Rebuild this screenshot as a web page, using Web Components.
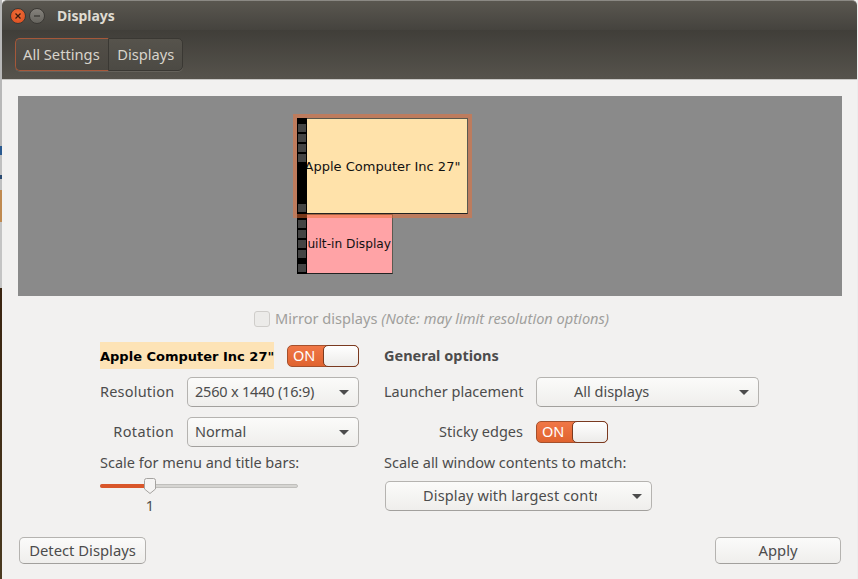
<!DOCTYPE html>
<html lang="en"><head><meta charset="utf-8"><title>Displays</title>
<style>
html,body{margin:0;padding:0;width:858px;height:579px;overflow:hidden;background:#ededed}
body{display:flex;font:15px "Noto Sans","Open Sans",sans-serif;color:#4c4c4c}
.strip{width:2px;height:579px;flex:none;background:linear-gradient(#b8b8b8 0,#b8b8b8 146px,#2a5a90 146px,#2a5a90 155px,#c0c0c0 155px,#c0c0c0 175px,#2a4a70 175px,#2a4a70 179px,#c0c0c0 179px,#c0c0c0 190px,#c08a50 190px,#c08a50 222px,#c4c4c4 222px,#c4c4c4 288px,#3a2410 288px,#4a3a20 100%)}
</style></head><body>
<div class="strip"></div>
<x-window>
  <x-titlebar slot="bar" title-text="Displays"></x-titlebar>
  <x-crumbs slot="bar"><x-crumb active>All Settings</x-crumb><x-crumb>Displays</x-crumb></x-crumbs>
  <x-preview>
    <x-monitor style="left:279px;top:118px;width:96px;height:60px;--fill:#ffa3a6;--fs:12.2px" label="Built-in Display"></x-monitor>
    <x-monitor style="left:279px;top:22px;width:171px;height:96px;--fill:#ffe2aa;--fs:13px" selected label="Apple Computer Inc 27&quot;"></x-monitor>
  </x-preview>
  <x-mirror>Mirror displays <i>(Note: may limit resolution options)</i></x-mirror>
  <x-columns>
    <x-col style="width:259px">
      <x-row style="height:27px"><x-heading>Apple Computer Inc 27"</x-heading><x-switch style="margin-left:13px"></x-switch></x-row>
      <x-row style="margin-top:8px"><x-label style="width:74px;justify-content:flex-start;letter-spacing:.2px">Resolution</x-label><x-combo style="width:172px;margin-left:13px;letter-spacing:-.2px" value="2560 x 1440 (16:9)"></x-combo></x-row>
      <x-row style="margin-top:10px"><x-label style="width:74px;letter-spacing:.35px">Rotation</x-label><x-combo style="width:172px;margin-left:13px" value="Normal"></x-combo></x-row>
      <x-label style="margin-top:6px;height:20px;justify-content:flex-start">Scale for menu and title bars:</x-label>
      <x-slider style="margin-top:5px" value="1"></x-slider>
    </x-col>
    <x-col style="width:376px;margin-left:25px">
      <x-label style="height:27px;justify-content:flex-start"><b style="font-weight:700;font-size:14.5px;color:#4c4c4c">General options</b></x-label>
      <x-row style="margin-top:8px"><x-label style="width:139px;justify-content:flex-start">Launcher placement</x-label><x-combo style="width:223px;margin-left:13px" value="All displays" inset="30"></x-combo></x-row>
      <x-row style="margin-top:10px"><x-label style="width:139px">Sticky edges</x-label><x-switch style="margin-left:13px;margin-block:4px"></x-switch></x-row>
      <x-label style="margin-top:6px;height:20px;justify-content:flex-start">Scale all window contents to match:</x-label>
      <x-combo style="width:267px;margin-left:1px;margin-top:8px;letter-spacing:.15px" value="Display with largest contr" inset="30" clip></x-combo>
    </x-col>
  </x-columns>
  <x-actions>
    <x-button style="width:127px">Detect Displays</x-button>
    <x-button style="width:126px">Apply</x-button>
  </x-actions>
</x-window>
<script>
function def(name,css,html){
  customElements.define(name,class extends HTMLElement{
    constructor(){super();this.attachShadow({mode:'open'})}
    connectedCallback(){
      this.shadowRoot.innerHTML='<style>'+css+'</style>'+(typeof html==='function'?html(this):html);
    }
  });
}
const FONT='"Noto Sans","Open Sans",sans-serif';
def('x-window',`:host{display:flex;flex-direction:column;width:855px;height:579px;flex:none;background:#f2f1f0;box-sizing:border-box;color:#4c4c4c;font:14.5px ${FONT}}
  .bar{display:block;flex:none}
  .body{flex:1;display:flex;flex-direction:column;padding:16px 15px 0 16px;border-top:1px solid #c9c8c5;min-height:0}`,
  `<div class="bar"><slot name="bar"></slot></div><div class="body"><slot></slot></div>`);
def('x-titlebar',`:host{display:flex;align-items:center;height:30px;box-sizing:border-box;border-top:1px solid #8b8984;border-radius:5px 5px 0 0;background:linear-gradient(#5a5750,#45433e);padding-left:8px}
  .b{width:16px;height:16px;box-sizing:border-box;border-radius:50%;display:flex;align-items:center;justify-content:center;flex:none}
  .c{background:radial-gradient(circle at 50% 40%,#f0703a,#d9481c);border:1px solid #3b3935;margin-right:3px}
  .m{background:linear-gradient(#85827c,#66645e);border:1px solid #3b3935}
  .t{margin-left:12px;font:700 14px ${FONT};color:#dfdbd2}
  svg{display:block}`,
  h=>`<span class="b c"><svg width="8" height="8" viewBox="0 0 8 8"><path d="M1.500 1.500l5 5M6.500 1.500l-5 5" stroke="#3c1a0c" stroke-width="1.300"/></svg></span>
  <span class="b m"><svg width="8" height="8" viewBox="0 0 8 8"><path d="M1 4h6" stroke="#3a3834" stroke-width="1.300"/></svg></span>
  <span class="t">${h.getAttribute('title-text')}</span>`);
def('x-crumbs',`:host{display:flex;align-items:center;height:49px;box-sizing:border-box;padding-left:13px;background:linear-gradient(#403e39,#56534c)}
  .g{display:flex;height:33px;box-sizing:border-box;border:1px solid #3a3833;border-radius:5px;background:linear-gradient(#56534c,#4c4a44);box-shadow:0 1px 0 #65625b}`,
  `<div class="g"><slot></slot></div>`);
def('x-crumb',`:host{display:flex;align-items:center;padding:0 8px 1px 8.500px;font:14.7px ${FONT};color:#d8d4cb;border-right:1px solid #3a3833;box-sizing:border-box}
  :host(:last-child){border-right:0}
  :host([active]){padding:0 8px 1px 7px;border:1px solid #a5583a;border-right-color:#3a3833;margin:-1px 0 -1px -1px;border-radius:5px 0 0 5px;background:linear-gradient(#534f48,#4a4741)}`,
  `<slot></slot>`);
def('x-preview',`:host{display:block;position:relative;height:200px;background:#8a8a8a;flex:none;overflow:hidden}`,`<slot></slot>`);
def('x-monitor',`:host{position:absolute;display:block;background:var(--fill);font:var(--fs,13px) "DejaVu Sans",sans-serif;color:#111}
  :host([selected]){outline:4px solid rgba(240,110,50,.5);z-index:1}
  .f{position:absolute;inset:0;box-sizing:border-box;border:1px solid #5a5a50;border-left:0;border-bottom-color:#222}
  .s{position:absolute;left:0;top:0;bottom:0;width:10px;background:#000;display:flex;flex-direction:column;padding:6px 0 2px;box-sizing:border-box}
  .h{height:8px;width:8px;margin:0 1px 2px;background:#444;flex:none}
  .h:last-child{margin-top:auto;margin-bottom:0}
  .l{position:absolute;left:0;right:0;top:0;bottom:0;display:flex;align-items:center;justify-content:center;white-space:nowrap}`,
  h=>`<div class="l">${h.getAttribute('label')}</div><div class="f"></div><div class="s"><div class="h"></div><div class="h"></div><div class="h"></div><div class="h"></div><div class="h"></div></div>`);
def('x-mirror',`:host{display:flex;align-items:center;justify-content:center;height:23px;margin-top:11px;margin-left:3px;font:14.6px ${FONT};color:#a09f9c;white-space:nowrap}
  .cb{width:14px;height:14px;border:1px solid #cfcdca;border-radius:3px;background:#ecebe9;margin-right:5px;flex:none;margin-bottom:-1px}
  .x{padding-bottom:2px}`,
  `<span class="cb"></span><span class="x"><slot></slot></span>`);
def('x-columns',`:host{display:flex;margin-top:12px;margin-left:82px}`,`<slot></slot>`);
def('x-col',`:host{display:flex;flex-direction:column;flex:none}`,`<slot></slot>`);
def('x-row',`:host{display:flex;align-items:center}`,`<slot></slot>`);
def('x-label',`:host{display:flex;align-items:center;justify-content:flex-end;white-space:nowrap;font:14.5px ${FONT};color:#4c4c4c;flex:none;padding-bottom:2px;box-sizing:border-box}`,`<slot></slot>`);
def('x-heading',`:host{display:flex;align-items:center;height:27px;width:174px;box-sizing:border-box;padding-top:1px;background:#fde3b6;font:700 13px "DejaVu Sans",sans-serif;color:#000;white-space:nowrap;flex:none}`,`<slot></slot>`);
def('x-switch',`:host{display:flex;position:relative;flex:none;width:72px;height:22px;box-sizing:border-box;border:1px solid #a5502c;border-radius:5px;background:linear-gradient(#f07746,#e0632f);font:14.5px ${FONT};color:#fff;align-items:center;padding:0 0 2px 5px}
  .k{position:absolute;right:-1px;top:-1px;width:36px;height:22px;box-sizing:border-box;border:1px solid #7a3a20;border-radius:5px;background:linear-gradient(#fff,#ecebe9)}`,
  `<span>ON</span><span class="k"></span>`);
def('x-combo',`:host{display:flex;align-items:center;flex:none;height:30px;box-sizing:border-box;border:1px solid #b5b3b0;border-bottom-color:#a2a09d;border-radius:5px;background:linear-gradient(#fbfbfa,#efeeec);font-family:${FONT};font-size:14.5px;color:#4c4c4c;padding:0 9px 2px 7px;white-space:nowrap}
  .v{flex:1;overflow:hidden;min-width:0}
  .a{width:0;height:0;border:5px solid transparent;border-top:5px solid #4c4c4c;border-bottom:0;flex:none;margin-top:2px}`,
  h=>`<span class="v" style="${h.hasAttribute('inset')?`padding-left:${h.getAttribute('inset')}px;`:''}${h.hasAttribute('clip')?'margin-right:35px;':''}">${h.getAttribute('value')}</span><span class="a"></span>`);
def('x-slider',`:host{display:block;width:198px;flex:none}
  .t{position:relative;height:16px;display:flex;align-items:center}
  .r{height:4px;width:100%;border-radius:2px;background:#d6d5d2;border:1px solid #c0bfbc;box-sizing:border-box}
  .f{position:absolute;left:0;top:6px;width:46px;height:4px;border-radius:2px 0 0 2px;background:#d9562a}
  svg{position:absolute;left:44px;top:0;display:block}
  .v{text-align:center;width:100px;font:14.5px ${FONT};margin-top:1px;color:#4c4c4c;line-height:20px}`,
  h=>`<div class="t"><div class="r"></div><div class="f"></div><svg width="12" height="16" viewBox="0 0 12 16"><path d="M2.500.5h7a2 2 0 0 1 2 2v8.500L6 15.500.5 11V2.500a2 2 0 0 1 2-2z" fill="#f5f4f3" stroke="#a5a3a0"/></svg></div><div class="v">${h.getAttribute('value')}</div>`);
def('x-actions',`:host{display:flex;justify-content:space-between;margin:22px 1px 0}`,`<slot></slot>`);
def('x-button',`:host{display:flex;align-items:center;justify-content:center;height:27px;box-sizing:border-box;border:1px solid #b5b3b0;border-bottom-color:#a2a09d;border-radius:5px;background:linear-gradient(#fbfbfa,#efeeec);font:14.8px ${FONT};color:#4c4c4c;white-space:nowrap;flex:none;padding-bottom:2px}`,`<slot></slot>`);
</script>
</body></html>
